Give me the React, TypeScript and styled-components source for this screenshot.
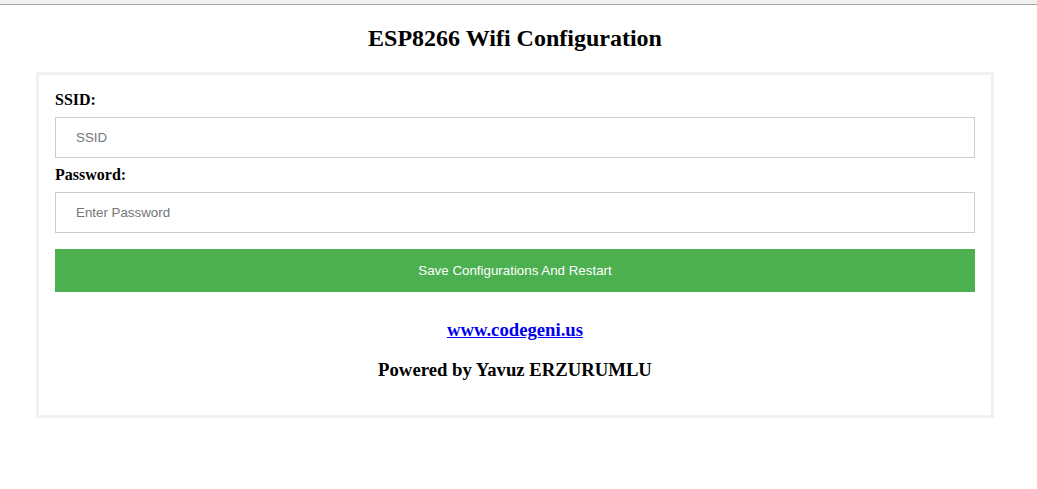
import React from "react";
import styled, { createGlobalStyle } from "styled-components";

const Global = createGlobalStyle`
  html, body { margin: 0; padding: 0; background: #fff; }
  body { font-family: "Liberation Serif", "Times New Roman", serif; color: #000; }
`;

const TopBar = styled.div`
  height: 4px;
  background: #f0f0f0;
  border-bottom: 1px solid #a3a3a3;
`;

const Wrapper = styled.div`
  width: 958px;
  margin-left: 36px;
  display: flow-root;
`;

const Title = styled.h2`
  font-family: "Liberation Serif", serif;
  font-size: 24px;
  font-weight: bold;
  text-align: center;
  margin: 19.92px 0;
`;

const Card = styled.div`
  border: 3px solid #f1f1f1;
  padding: 16px;
  display: flex;
  flex-direction: column;
`;

const Label = styled.label`
  font-family: "Liberation Serif", serif;
  font-size: 16px;
  font-weight: bold;
  line-height: 18px;
`;

const Input = styled.input`
  box-sizing: border-box;
  width: 100%;
  margin: 8px 0;
  padding: 12px 20px;
  border: 1px solid #ccc;
  font-family: "Liberation Sans", Arial, sans-serif;
  font-size: 13.333px;
  line-height: 15px;
  height: 41px;
  outline: none;
  &::placeholder { color: #757575; }
`;

const Button = styled.button`
  box-sizing: border-box;
  width: 100%;
  height: 43px;
  margin: 8px 0;
  padding: 14px 20px;
  border: none;
  background: #4caf50;
  color: #fff;
  font-family: "Liberation Sans", Arial, sans-serif;
  font-size: 13.333px;
  cursor: pointer;
`;

const Footer = styled.h3<{ $last?: boolean }>`
  font-family: "Liberation Serif", serif;
  font-size: 18.72px;
  font-weight: bold;
  text-align: center;
  margin: ${(p) => (p.$last ? "0 0 18.72px" : "18.72px 0")};
  line-height: 21.5px;
`;

const Link = styled.a`
  color: #0000ee;
  text-decoration: underline;
`;

export default function App() {
  return (
    <>
      <Global />
      <TopBar />
      <Wrapper>
        <Title>ESP8266 Wifi Configuration</Title>
        <Card>
          <Label htmlFor="ssid">SSID:</Label>
          <Input id="ssid" type="text" placeholder="SSID" />
          <Label htmlFor="pass">Password:</Label>
          <Input id="pass" type="password" placeholder="Enter Password" />
          <Button type="button">Save Configurations And Restart</Button>
          <Footer>
            <Link href="#">www.codegeni.us</Link>
          </Footer>
          <Footer $last>Powered by Yavuz ERZURUMLU</Footer>
        </Card>
      </Wrapper>
    </>
  );
}
